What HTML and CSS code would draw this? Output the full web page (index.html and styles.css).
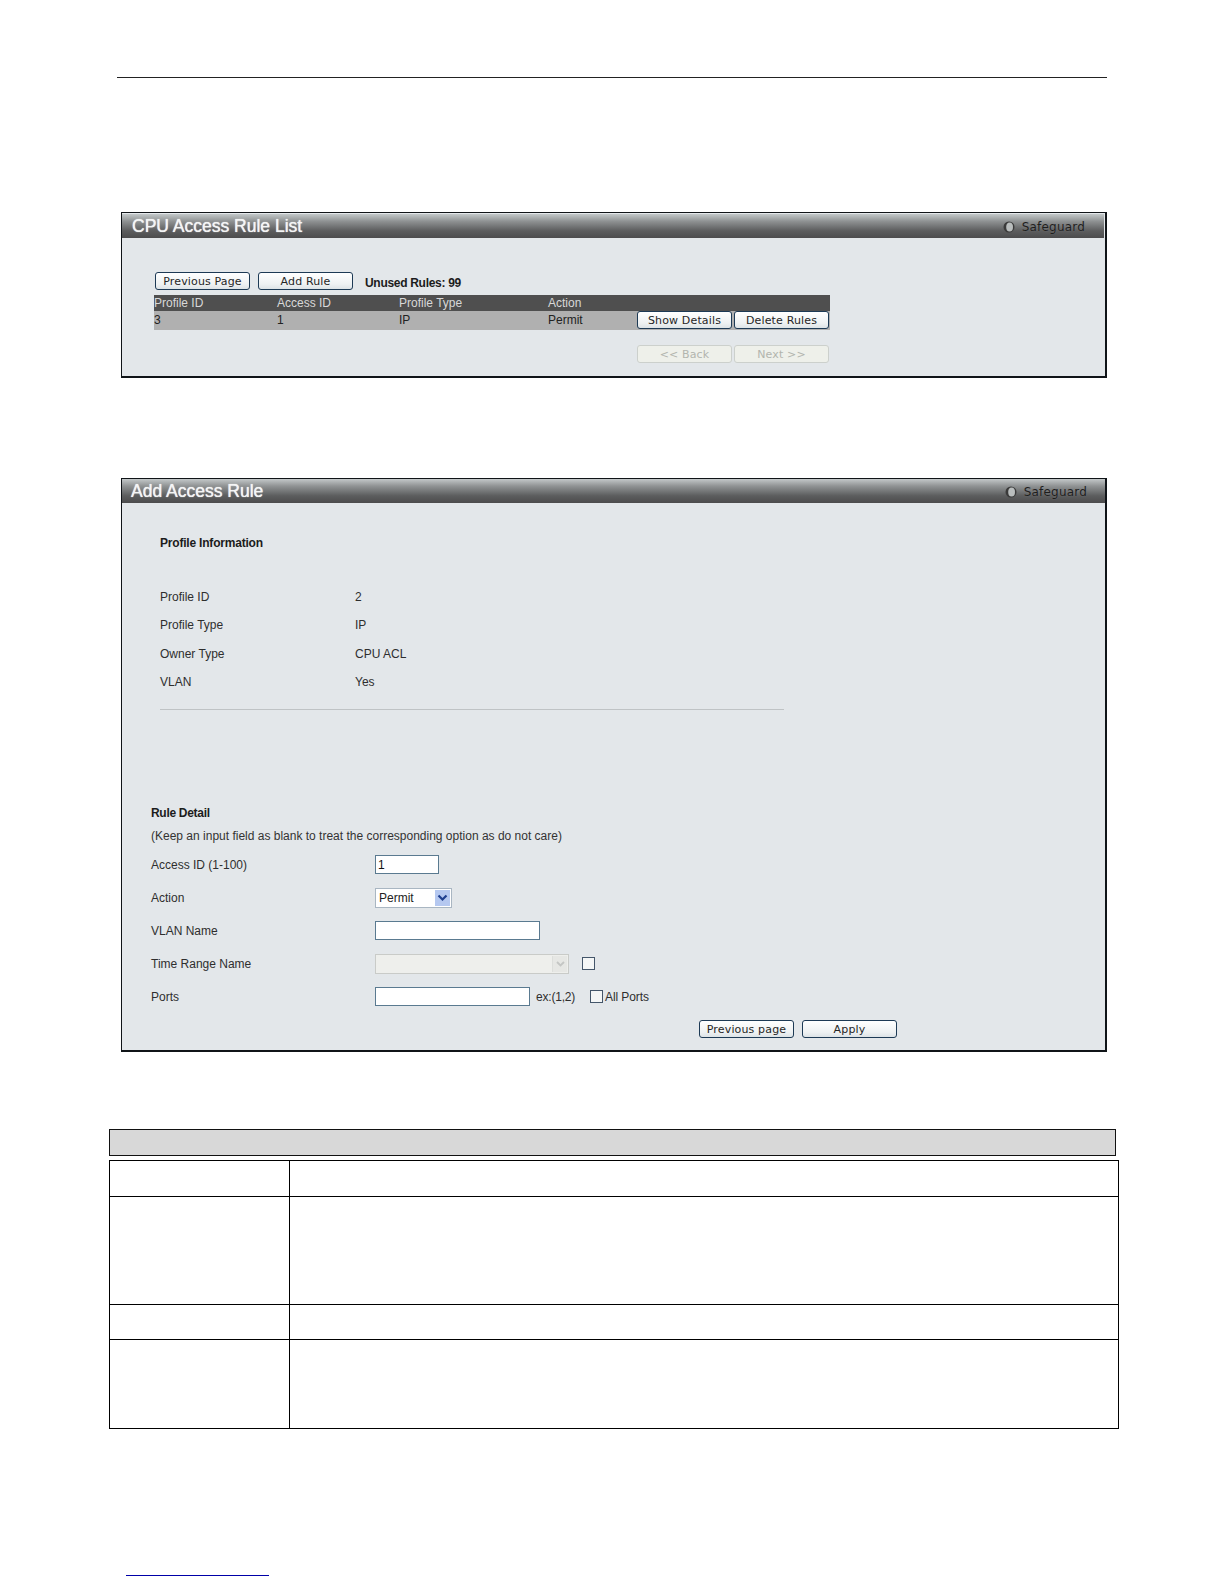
FILE: index.html
```html
<!DOCTYPE html>
<html lang="en">
<head>
<meta charset="utf-8">
<title>CPU Access Rule List</title>
<link rel="stylesheet" href="styles.css">
</head>
<body>
<div class="page">
  <div class="top-rule"></div>

  <section class="panel panel-list">
    <header class="title-bar title-bar-list">
      <h2 class="title">CPU Access Rule List</h2>
      <div class="safeguard">
        <svg class="led" width="12" height="12" viewBox="0 0 12 12"><circle cx="6" cy="6" r="5.5" fill="#3a3a3a"/><ellipse cx="6.6" cy="6" rx="3.4" ry="4.6" fill="#b9bdbd"/></svg>
        <span>Safeguard</span>
      </div>
    </header>
    <div class="list-body">
      <div class="toolbar">
        <button class="btn">Previous Page</button>
        <button class="btn">Add Rule</button>
        <strong class="unused">Unused Rules: 99</strong>
      </div>
      <div class="rule-table">
        <div class="rule-row rule-head">
          <span>Profile ID</span><span>Access ID</span><span>Profile Type</span><span>Action</span>
        </div>
        <div class="rule-row rule-data">
          <span>3</span><span>1</span><span>IP</span><span>Permit</span>
          <div class="row-actions">
            <button class="btn">Show Details</button>
            <button class="btn">Delete Rules</button>
          </div>
        </div>
      </div>
      <div class="pager">
        <button class="btn btn-off">&lt;&lt; Back</button>
        <button class="btn btn-off">Next &gt;&gt;</button>
      </div>
    </div>
  </section>

  <section class="panel panel-add">
    <header class="title-bar title-bar-add">
      <h2 class="title title-add">Add Access Rule</h2>
      <div class="safeguard">
        <svg class="led" width="12" height="12" viewBox="0 0 12 12"><circle cx="6" cy="6" r="5.5" fill="#3a3a3a"/><ellipse cx="6.6" cy="6" rx="3.4" ry="4.6" fill="#b9bdbd"/></svg>
        <span>Safeguard</span>
      </div>
    </header>
    <div class="add-body">
      <h3 class="profile-heading">Profile Information</h3>
      <dl class="profile-info">
        <dt>Profile ID</dt><dd>2</dd>
        <dt>Profile Type</dt><dd>IP</dd>
        <dt>Owner Type</dt><dd>CPU ACL</dd>
        <dt>VLAN</dt><dd>Yes</dd>
      </dl>
      <div class="divider"></div>
      <h3 class="rule-heading">Rule Detail</h3>
      <p class="hint">(Keep an input field as blank to treat the corresponding option as do not care)</p>
      <div class="form">
        <label class="form-label">Access ID (1-100)</label>
        <div class="form-field"><input class="input input-id" type="text" value="1"></div>
        <label class="form-label">Action</label>
        <div class="form-field">
          <div class="select select-action">
            <span>Permit</span>
            <span class="arrow"><svg width="11" height="8" viewBox="0 0 11 8"><path d="M1.5 1.5 5.5 5.5 9.5 1.5" fill="none" stroke="#1f3f8f" stroke-width="2.2"/></svg></span>
          </div>
        </div>
        <label class="form-label">VLAN Name</label>
        <div class="form-field"><input class="input input-vlan" type="text"></div>
        <label class="form-label">Time Range Name</label>
        <div class="form-field">
          <div class="select select-time">
            <span></span>
            <span class="arrow arrow-off"><svg width="11" height="8" viewBox="0 0 11 8"><path d="M2 2 5.5 5.5 9 2" fill="none" stroke="#c4c6c4" stroke-width="1.8"/></svg></span>
          </div>
          <span class="check check-time"></span>
        </div>
        <label class="form-label">Ports</label>
        <div class="form-field">
          <input class="input input-ports" type="text">
          <span class="example">ex:(1,2)</span>
          <span class="check check-all"></span>
          <span class="all-ports">All Ports</span>
        </div>
      </div>
      <div class="form-actions">
        <button class="btn">Previous page</button>
        <button class="btn">Apply</button>
      </div>
    </div>
  </section>

  <div class="gray-bar"></div>
  <table class="doc-table">
    <tr class="row-a"><td class="col-a"></td><td></td></tr>
    <tr class="row-b"><td class="col-a"></td><td></td></tr>
    <tr class="row-c"><td class="col-a"></td><td></td></tr>
    <tr class="row-d"><td class="col-a"></td><td></td></tr>
  </table>
  <div class="foot-link"></div>
</div>
</body>
</html>
```
FILE: styles.css
```css
* { box-sizing: border-box; }
html, body { margin: 0; padding: 0; background: #fff; }
.page {
  width: 1224px;
  height: 1584px;
  overflow: hidden;
  font-family: "Liberation Sans", Arial, sans-serif;
  font-size: 12px;
  color: #2e2e2e;
}
.top-rule { height: 1px; width: 990px; margin: 77px 0 0 117px; background: #222; }

.panel {
  width: 986px;
  margin-left: 121px;
  background: #e3e7ea;
  border: 1px solid #101418;
  border-right-width: 2px;
  border-bottom-width: 2px;
}
.panel-list { height: 166px; margin-top: 134px; }
.panel-add { height: 574px; margin-top: 100px; }

.title-bar {
  display: flex;
  align-items: center;
  justify-content: space-between;
  background: linear-gradient(#c3c8c9 0%, #8f9293 30%, #5c5d5e 70%, #4c4c4d 100%);
}
.title-bar-list { height: 24px; margin-top: 1px; margin-right: 1px; padding: 0 19px 0 10px; }
.title-bar-add { height: 24px; padding: 0 18px 0 9px; }
.title {
  margin: 0;
  font-size: 17.5px;
  font-weight: 400;
  line-height: 24px;
  color: #f4f5f5;
  text-shadow: 0 0 1px #fff;
}
.safeguard {
  display: flex;
  align-items: center;
  gap: 7px;
  font-family: "DejaVu Sans", sans-serif;
  font-size: 12px;
  letter-spacing: 0.2px;
  color: #1e1e1e;
  text-shadow: 0 0 1px #808080;
  position: relative;
  top: 1px;
}
.led { display: block; }

.btn {
  display: block;
  width: 95px;
  height: 18px;
  padding: 0;
  font-family: "DejaVu Sans", Verdana, sans-serif;
  font-size: 11px;
  line-height: 15px;
  letter-spacing: 0.15px;
  color: #262626;
  background: linear-gradient(#ffffff, #eef1f2 70%, #dde3e6);
  border: 1px solid #1d3a55;
  border-radius: 3px;
}
.btn-off {
  color: #b2b5ae;
  background: #eef0ea;
  border-color: #ccd0cc;
}

.list-body { padding: 34px 0 0 33px; }
.toolbar { display: flex; align-items: center; gap: 8px; height: 18px; }
.unused { margin-left: 4px; font-size: 12px; letter-spacing: -0.3px; color: #1c1c1c; position: relative; top: 2px; }

.rule-table { width: 676px; margin: 5px 0 0 -1px; }
.rule-row { display: flex; align-items: center; }
.rule-row > span { flex: none; }
.rule-row > span:nth-child(1) { width: 123px; }
.rule-row > span:nth-child(2) { width: 122px; }
.rule-row > span:nth-child(3) { width: 149px; }
.rule-row > span:nth-child(4) { width: 89px; }
.rule-head { height: 16px; background: #4f4f4f; color: #d8d8d8; }
.rule-data { height: 19px; background: #b0b0b0; color: #222; }
.rule-data > span { margin-bottom: 2px; }
.row-actions { display: flex; gap: 2px; margin-top: -1px; }

.pager { display: flex; gap: 2px; margin: 15px 0 0 482px; }

.add-body { padding: 0; }
.profile-heading {
  margin: 33px 0 0 38px;
  font-size: 12px;
  font-weight: 700;
  letter-spacing: -0.2px;
  line-height: 14px;
  color: #1c1c1c;
}
.profile-info {
  display: grid;
  grid-template-columns: 195px 1fr;
  grid-auto-rows: 28.3px;
  align-items: center;
  margin: 33px 0 0 38px;
}
.profile-info dt, .profile-info dd { margin: 0; }
.divider { width: 624px; height: 1px; margin: 13px 0 0 38px; background: #bfc3c5; }
.rule-heading {
  margin: 96px 0 0 29px;
  font-size: 12px;
  font-weight: 700;
  letter-spacing: -0.3px;
  line-height: 14px;
  color: #1c1c1c;
}
.hint { margin: 9px 0 0 29px; font-size: 12px; line-height: 14px; color: #333; }
.form {
  display: grid;
  grid-template-columns: 224px 1fr;
  grid-auto-rows: 33px;
  align-items: center;
  margin: 5px 0 0 29px;
}
.form-label { display: block; }
.form-field { display: flex; align-items: center; }
.input {
  display: block;
  height: 19px;
  padding: 0 2px;
  font-family: "Liberation Sans", Arial, sans-serif;
  font-size: 12px;
  color: #111;
  background: #fff;
  border: 1px solid #5a7a90;
  border-radius: 0;
  outline: none;
}
.input-id { width: 64px; }
.input-vlan { width: 165px; }
.input-ports { width: 155px; }
.select {
  display: flex;
  align-items: center;
  justify-content: space-between;
  height: 20px;
  padding: 0 1px 0 3px;
  background: #fff;
  border: 1px solid #a9b6c2;
  color: #222;
}
.select-action { width: 77px; }
.select-time { width: 194px; background: #eeefec; border-color: #c9cbc8; }
.arrow {
  display: flex;
  align-items: center;
  justify-content: center;
  width: 15px;
  height: 16px;
  background: #b5c8f0;
}
.arrow-off { background: #e6e7e4; border-left: 1px solid #dcdedb; }
.check {
  display: block;
  width: 13px;
  height: 13px;
  background: #f4f6f6;
  border: 1px solid #44566a;
}
.check-time { margin-left: 13px; }
.example { margin-left: 6px; letter-spacing: -0.2px; }
.check-all { margin-left: 15px; }
.all-ports { margin-left: 2px; letter-spacing: -0.1px; }
.form-actions { display: flex; gap: 8px; margin: 0 0 0 577px; position: relative; top: 7px; }

.gray-bar {
  width: 1007px;
  height: 27px;
  margin: 77px 0 0 109px;
  background: #d8d8d8;
  border: 1px solid #111;
}
.doc-table {
  width: 1010px;
  margin: 4px 0 0 109px;
  border-collapse: collapse;
  table-layout: fixed;
}
.doc-table td { padding: 0; border: 1px solid #000; }
.col-a { width: 180px; }
.row-a { height: 36px; }
.row-b { height: 108px; }
.row-c { height: 35px; }
.row-d { height: 89px; }
.foot-link { width: 143px; height: 1px; margin: 146px 0 0 126px; background: #0000a8; }
```
